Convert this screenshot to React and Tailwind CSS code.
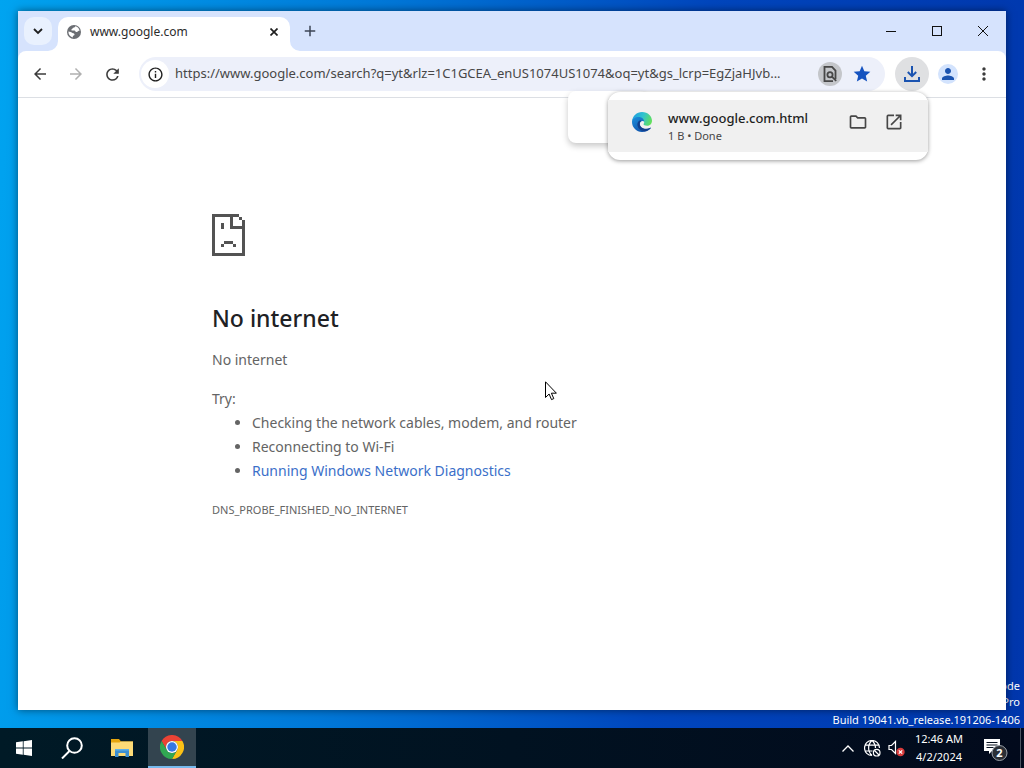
import { useId } from "react";
import {
  MdArrowBack, MdArrowForward, MdRefresh, MdInfoOutline, MdStar, MdPerson, MdMoreVert,
  MdOutlineFolder, MdOpenInNew, MdAdd,
} from "react-icons/md";

function EdgeLogo() {
  const id = useId();
  return (
    <svg viewBox="0 0 20 20" className="size-5" aria-hidden="true">
      <defs>
        <linearGradient id={id + "top"} x1="0" y1="0.3" x2="1" y2="0.6">
          <stop offset="0" stopColor="#1f9de0" />
          <stop offset="0.5" stopColor="#2fc3cf" />
          <stop offset="1" stopColor="#63e05a" />
        </linearGradient>
        <linearGradient id={id + "low"} x1="0" y1="0" x2="0.7" y2="1">
          <stop offset="0" stopColor="#1b8fdc" />
          <stop offset="1" stopColor="#0f4fa8" />
        </linearGradient>
      </defs>
      <path fill={`url(#${id}top)`} d="M0 9.600C.5 4 4.700 0 10 0c6 0 10 4.400 10 8.800 0 3-2.200 5-5 5-2.300 0-3.500-.8-3.500-1.500 0-.5.700-.8.700-2.100 0-1.900-2.100-3.600-5-3.600C3.600 6.600.700 8 0 9.600z" />
      <path fill={`url(#${id}low)`} d="M0 10C0 7 3.200 5 6.600 5c3.600 0 5.600 2.300 5.600 4.600C10.500 8.300 7.800 9.400 7.800 12c0 3 3 5 6.200 5 2 0 3.500-.7 4.300-1.200.3-.2.600.1.400.4C17 18.600 13.800 20 10 20 4.500 20 0 15.600 0 10z" />
      <path fill="#123f8c" d="M7.200 8.800C5.600 10 5 12 5.600 14c.9 3.200 4 5.200 7.400 5.200 2.500-.6 4.600-1.700 5.800-3.200.1-.3-.1-.4-.4-.2-.9.500-2.300 1-4.200 1-3.500 0-6.400-2.200-6.400-4.900 0-1.300.6-2.300 1.600-3.100-.8-.3-1.600-.3-2.200 0z" />
    </svg>
  );
}

function ChromeLogo() {
  return (
    <svg viewBox="0 0 48 48" className="size-6" aria-hidden="true">
      <path fill="#ea4335" d="M3.200 12A24 24 0 0 1 44.800 12H24a12 12 0 0 0-10.400 18z" />
      <path fill="#fbc116" d="M44.800 12A24 24 0 0 1 24 48l10.400-18A12 12 0 0 0 24 12z" />
      <path fill="#31a752" d="M24 48A24 24 0 0 1 3.200 12l10.400 18A12 12 0 0 0 34.400 30z" />
      <circle cx="24" cy="24" r="12" fill="#fff" />
      <circle cx="24" cy="24" r="9.500" fill="#3578e5" />
    </svg>
  );
}

function SadPage() {
  return (
    <svg viewBox="0 0 11 14" width="33" height="42" fill="#535353" shapeRendering="crispEdges" aria-hidden="true">
      <path d="M0 0h9v1H7v3h3V2h1v12H0zM1 1v12h9V5H6V1zM9 1h1v1H9zM3 3h1v2H3zM4 9h3v1H4zM3 10h1v1H3zM7 10h1v1H7z" fillRule="evenodd" />
    </svg>
  );
}

function Globe() {
  return (
    <svg viewBox="0 0 14 14" className="size-3.5" aria-hidden="true">
      <circle cx="7" cy="7" r="7" fill="#6b6e73" />
      <path fill="#fff" d="M8.200 1.300c-.2 1-.8 1.300-1.900 1.400-.9.100-.7 1.400-1.500 1.600-.8.200-.6 1.100.1 1.200h2.600c.9.100.8 1.300 1.600 1.500.9.100 1.700-.6 2.300-1.100.5-.4.900-.2 1.200.1C12.300 3.600 10.600 1.700 8.200 1.300zM1.400 6.500c-.2 2.900 1.700 5.200 4.300 5.900.1-.9.100-1.700 1-1.900.9-.3 1.100-1.200.5-1.800-.7-.6-1.500-.3-2.200-.9-.7-.7-2-1.200-3.600-1.300z" />
    </svg>
  );
}

function DownloadIcon() {
  return (
    <svg viewBox="0 0 18 18" className="size-[18px]" fill="none" stroke="currentColor" strokeWidth="2" aria-hidden="true">
      <path d="M9 1v10M4.800 7 9 11.200 13.200 7M2 12v4h14v-4" />
    </svg>
  );
}

function PageSearch() {
  return (
    <svg viewBox="0 0 18 18" className="size-[18px]" fill="none" stroke="#474747" strokeWidth="1.800" aria-hidden="true">
      <path d="M14.500 14V5.500L11 1.900H3.500v14.200H12" />
      <circle cx="9" cy="9.700" r="2.600" />
      <path d="m10.900 11.600 4.300 4.300" />
    </svg>
  );
}

function TitleBar() {
  return (
    <header className="flex h-10 bg-[#d6e3fd]">
      <button aria-label="Search tabs" className="mt-1.5 ml-1.5 grid size-7 place-items-center rounded-[10px] bg-[#e9f1fe] text-[#1f1f1f]">
        <svg viewBox="0 0 10 10" className="size-2.5" fill="none" stroke="currentColor" strokeWidth="1.800"><path d="m1 3 4 4 4-4" /></svg>
      </button>
      <div className="relative mt-1.5 ml-1.5 flex w-[232px] items-center rounded-t-[10px] bg-white pr-2 pb-1 pl-[9px]">
        <svg viewBox="0 0 10 10" className="absolute bottom-0 -left-2.5 size-2.5" fill="#fff" aria-hidden="true"><path d="M10 0v10H0A10 10 0 0 0 10 0z" /></svg>
        <svg viewBox="0 0 10 10" className="absolute -right-2.5 bottom-0 size-2.5" fill="#fff" aria-hidden="true"><path d="M0 0v10h10A10 10 0 0 1 0 0z" /></svg>
        <Globe />
        <span className="ml-[9px] flex-1 text-[12px] text-[#2b2b2b]">www.google.com</span>
        <button aria-label="Close tab" className="grid size-4 place-items-center text-[#1f1f1f]">
          <svg viewBox="0 0 8 8" className="size-2" stroke="currentColor" strokeWidth="1.700"><path d="m.5.500 7 7m0-7-7 7" /></svg>
        </button>
      </div>
      <button aria-label="New tab" className="mt-1.5 ml-1.5 grid size-7 place-items-center text-[#3c4555]">
        <MdAdd size={18} />
      </button>
      <div className="ml-auto flex text-[#111]">
        <button aria-label="Minimize" className="grid w-[46px] place-items-center">
          <svg viewBox="0 0 10 10" className="size-2.5" stroke="currentColor" shapeRendering="crispEdges"><path d="M0 5.500h10" /></svg>
        </button>
        <button aria-label="Maximize" className="grid w-[46px] place-items-center">
          <svg viewBox="0 0 10 10" className="size-2.5" fill="none" stroke="currentColor" shapeRendering="crispEdges"><path d="M.5.500h9v9h-9z" /></svg>
        </button>
        <button aria-label="Close" className="grid w-[46px] place-items-center">
          <svg viewBox="0 0 10 10" className="size-2.5" stroke="currentColor"><path d="m0 0 10 10M10 0 0 10" /></svg>
        </button>
      </div>
    </header>
  );
}

function Toolbar() {
  return (
    <div className="bg-[#d6e3fd]">
      <div className="flex h-[47px] items-center rounded-t-lg border-b border-[#dcdfe4] bg-white px-1 text-[#3c3c3c]">
        <button aria-label="Back" className="grid size-9 place-items-center"><MdArrowBack size={18} /></button>
        <button aria-label="Forward" className="grid size-9 place-items-center text-[#b0b0b0]"><MdArrowForward size={18} /></button>
        <button aria-label="Reload" className="grid size-9 place-items-center"><MdRefresh size={19} /></button>
        <div className="mx-[9px] flex h-[34px] min-w-0 flex-1 items-center rounded-full bg-[#edf0fa] pr-[11px] pl-0.5">
          <button aria-label="View site information" className="grid size-7 shrink-0 place-items-center rounded-full bg-white text-[#1f1f1f]">
            <MdInfoOutline size={17} />
          </button>
          <input
            aria-label="Address"
            readOnly
            value="https://www.google.com/search?q=yt&rlz=1C1GCEA_enUS1074US1074&oq=yt&gs_lcrp=EgZjaHJvb..."
            className="ml-1.5 min-w-0 flex-1 bg-transparent text-[13px] text-[#474747] outline-none"
          />
          <button aria-label="Search this page" className="mx-2 grid size-6 shrink-0 place-items-center rounded-full bg-[#c4c6ca]">
            <PageSearch />
          </button>
          <button aria-label="Edit bookmark" className="grid size-6 shrink-0 place-items-center text-[#1553c0]">
            <MdStar size={20} />
          </button>
        </div>
        <button aria-label="Downloads" className="mx-px grid size-[34px] place-items-center rounded-full bg-[#dfe0e2] text-[#1a53b0]">
          <DownloadIcon />
        </button>
        <button aria-label="Profile" className="grid size-9 place-items-center text-[#1a53b0]">
          <span className="grid size-5 place-items-center rounded-full bg-[#d3e3fd]"><MdPerson size={18} /></span>
        </button>
        <button aria-label="Menu" className="grid size-9 place-items-center"><MdMoreVert size={20} /></button>
      </div>
    </div>
  );
}

function DownloadBubble() {
  return (
    <>
      <div className="absolute top-20 right-[358px] h-[52px] w-20 rounded-lg bg-white shadow-[0_3px_6px_rgba(0,0,0,0.22)]" />
      <section aria-label="Downloads" className="absolute top-[81px] right-[78px] w-80 rounded-xl bg-white py-2 shadow-[0_1px_4px_rgba(0,0,0,0.4)]">
        <div className="flex h-[52px] items-center bg-[#f0f0f0] pr-4 pl-6">
          <div className="mb-2"><EdgeLogo /></div>
          <div className="ml-4 flex-1">
            <div className="text-[13px] leading-5 font-medium text-[#1f1f1f]">www.google.com.html</div>
            <div className="text-[11px] leading-4 text-[#474747]">1 B • Done</div>
          </div>
          <div className="mb-2 flex text-[#474747]">
            <button aria-label="Show in folder" className="grid size-9 place-items-center"><MdOutlineFolder size={20} /></button>
            <button aria-label="Open" className="grid size-9 place-items-center"><MdOpenInNew size={20} /></button>
          </div>
        </div>
      </section>
    </>
  );
}

function ErrorPage() {
  return (
    <main className="mx-auto w-full max-w-[600px] flex-1 pt-[116px] text-[14px] leading-6 text-[#646464]">
      <SadPage />
      <h1 className="mt-12 text-[23px] leading-7 font-medium text-[#202124]">No internet</h1>
      <p className="mt-4">No internet</p>
      <div className="mt-[15px]">
        <p>Try:</p>
        <ul className="list-disc pl-10">
          <li>Checking the network cables, modem, and router</li>
          <li>Reconnecting to Wi-Fi</li>
          <li><a href="#diagnostics" className="text-[#3b6fc9]">Running Windows Network Diagnostics</a></li>
        </ul>
      </div>
      <p className="mt-[15px] text-[11px]">DNS_PROBE_FINISHED_NO_INTERNET</p>
    </main>
  );
}

function Taskbar() {
  return (
    <footer className="relative flex h-10 bg-[linear-gradient(90deg,#001a26,#020a1c)] text-white">
      <button aria-label="Start" className="grid w-12 place-items-center">
        <svg viewBox="0 0 16 16" className="size-4" fill="currentColor"><path d="M0 2.300 6.800 1.300v6.300H0zM7.600 1.200 16 0v7.600H7.600zM0 8.400h6.800v6.300L0 13.700zM7.600 8.400H16V16l-8.400-1.200z" /></svg>
      </button>
      <button aria-label="Search" className="grid w-12 place-items-center">
        <svg viewBox="0 0 22 22" className="size-[22px]" fill="none" stroke="currentColor" strokeWidth="2"><circle cx="13.500" cy="8.500" r="7.300" /><path d="M8.500 14 1 21.500" /></svg>
      </button>
      <button aria-label="File Explorer" className="grid w-[52px] place-items-center">
        <svg viewBox="0 0 22 18" className="h-[18px] w-[22px]">
          <path fill="#e5a50e" d="M0 0h8l2 2.500h12V5H0z" />
          <path fill="#fddb77" d="M0 3.500h8.500l1.500-1h12V17H0z" />
          <path fill="#3d8fd1" d="M4 10h14v8h-3.500v-4h-7v4H4z" />
          <path fill="#5eb0e8" d="M4 10h14v1.500H4z" />
        </svg>
      </button>
      <button aria-label="Google Chrome" className="grid w-12 place-items-center border-b-2 border-[#76b9ed] bg-[#33444f]">
        <ChromeLogo />
      </button>
      <div className="ml-auto flex items-center">
        <button aria-label="Show hidden icons" className="grid size-6 place-items-center">
          <svg viewBox="0 0 12 7" className="h-[7px] w-3" fill="none" stroke="currentColor" strokeWidth="1.300"><path d="m.5 6.500 5.500-5.500 5.500 5.500" /></svg>
        </button>
        <button aria-label="Network" className="grid size-6 place-items-center">
          <svg viewBox="0 0 17 17" className="size-[17px]" fill="none" stroke="currentColor" strokeWidth="1.200">
            <path d="M15.500 8A7.500 7.500 0 1 0 8 15.500M8 .5C3.500 4.500 3.500 11.500 8 15.500M8 .5c2.300 2 3.400 4.500 3.500 7.500M1.300 5.200h13.400M1.300 11H8.500" />
            <circle cx="12.700" cy="12.700" r="3.300" /><path d="m10.500 10.500 4.500 4.500" />
          </svg>
        </button>
        <button aria-label="Volume muted" className="grid size-6 place-items-center">
          <svg viewBox="0 0 17 17" className="size-[17px]">
            <path d="M1 5.500h2.500L7.500 1.500v12l-4-4H1z" fill="none" stroke="#fff" strokeWidth="1.200" />
            <circle cx="12.500" cy="12" r="4.200" fill="#d83b3b" /><path d="m10.800 10.300 3.400 3.400m0-3.400-3.400 3.400" stroke="#fff" strokeWidth="1.200" />
          </svg>
        </button>
        <button aria-label="Clock" className="w-[62px] text-center text-[11px] leading-[18px]">
          <span className="block">12:46 AM</span>
          <span className="block">4/2/2024</span>
        </button>
        <button aria-label="Notifications" className="grid w-[50px] place-items-center">
          <svg viewBox="0 0 26 26" className="size-[26px]">
            <path fill="#fff" d="M2 4h16v12h-8l-3 3v-3H2z" />
            <path stroke="#06101f" strokeWidth="1.200" d="M4.500 7.500h11M4.500 10h11M4.500 12.500h7" />
            <circle cx="17.500" cy="18" r="7.500" fill="#2b2f36" stroke="#9aa0a8" />
            <text x="17.500" y="22" textAnchor="middle" fill="#fff" fontSize="11" fontWeight="700">2</text>
          </svg>
        </button>
        <div className="h-10 w-1 border-l border-[#4c5562]" />
      </div>
    </footer>
  );
}

export default function App() {
  return (
    <div className="flex min-h-screen flex-col bg-[linear-gradient(95deg,#00a4f0,#0078d8_35%,#0046bd_65%,#0036ac)] font-['Noto_Sans','Open_Sans',sans-serif]">
      <div className="relative flex flex-1 flex-col px-[18px] pt-[11px] pb-[18px]">
        <div className="absolute right-1 bottom-0 text-right text-[11px] leading-4 text-white">
          <div>Test Mode</div>
          <div className="mb-0.5">Windows 10 Pro</div>
          <div>Build 19041.vb_release.191206-1406</div>
        </div>
        <div className="relative flex flex-1 flex-col bg-white shadow-[0_0_8px_rgba(0,0,0,0.5)]">
          <TitleBar />
          <Toolbar />
          <ErrorPage />
          <DownloadBubble />
        </div>
        <svg viewBox="0 0 12 20" className="absolute top-[381px] left-[545px] h-5 w-3" aria-hidden="true">
          <path d="M.5.800v15.700l3.600-3.500 2.400 5.600 2.300-1-2.400-5.400h5z" fill="#fff" stroke="#000" />
        </svg>
      </div>
      <Taskbar />
    </div>
  );
}
